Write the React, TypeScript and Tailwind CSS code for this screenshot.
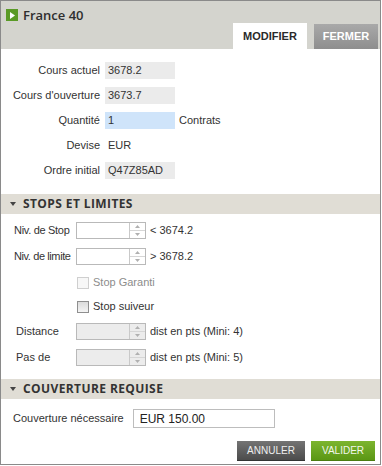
import React from "react";

const Spinner = ({ disabled }: { disabled?: boolean }) => (
  <div
    className={`flex h-[17px] w-[70px] shrink-0 border border-[#b9b9b9] ${disabled ? "bg-[#ececec]" : "bg-white"}`}
  >
    <div className="flex-1" />
    <div className="flex w-[16px] flex-col border-l border-[#c9c9c9]">
      <div className="flex flex-1 items-center justify-center border-b border-[#d6d6d6]">
        <svg width="5" height="3" viewBox="0 0 5 3">
          <polygon points="0,3 5,3 2.5,0" fill="#b0b0b0" />
        </svg>
      </div>
      <div className="flex flex-1 items-center justify-center">
        <svg width="5" height="3" viewBox="0 0 5 3">
          <polygon points="0,0 5,0 2.5,3" fill="#b0b0b0" />
        </svg>
      </div>
    </div>
  </div>
);

const Band = ({ title }: { title: string }) => (
  <div className="flex h-[20px] items-center bg-[#e0ddd5] pl-[9px]">
    <svg width="6" height="4" viewBox="0 0 6 4" className="mr-[7px]">
      <polygon points="0,0 6,0 3,4" fill="#444" />
    </svg>
    <span
      className="text-[12px] font-bold tracking-[0.4px] text-[#333] leading-none whitespace-nowrap"
      style={{ fontFamily: '"Open Sans", sans-serif' }}
    >
      {title}
    </span>
  </div>
);

const Checkbox = ({ disabled }: { disabled?: boolean }) => (
  <div
    className={`h-[12px] w-[12px] border ${
      disabled
        ? "border-[#cfcfcf] bg-[#f7f7f7]"
        : "border-[#8f8f8f] bg-gradient-to-b from-[#dcdcdc] to-[#f4f4f4]"
    }`}
  />
);

export default function App() {
  const rows = [
    { label: "Cours actuel", value: "3678.2", kind: "gray" },
    { label: "Cours d'ouverture", value: "3673.7", kind: "gray" },
    { label: "Quantité", value: "1", kind: "blue", suffix: "Contrats" },
    { label: "Devise", value: "EUR", kind: "plain" },
    { label: "Ordre initial", value: "Q47Z85AD", kind: "gray" },
  ];
  return (
    <div
      className="flex h-[465px] w-[381px] flex-col border border-[#8a8a8a] bg-white text-[11px] text-[#333] whitespace-nowrap"
      style={{ fontFamily: '"Liberation Sans", Arial, sans-serif' }}
    >
      {/* Header */}
      <div className="flex h-[48px] flex-col bg-[#d4d4ce]">
        <div className="flex h-[12px] items-center pl-[5px] mt-[8px]">
          <div className="flex h-[12px] w-[12px] items-center justify-center bg-[#5a9a26]">
            <svg width="5" height="7" viewBox="0 0 5 7">
              <polygon points="0,0 5,3.5 0,7" fill="#fff" />
            </svg>
          </div>
          <span
            className="ml-[5px] text-[13px] font-semibold text-[#2e2e2e] leading-none"
            style={{ fontFamily: '"Open Sans", sans-serif' }}
          >
            France 40
          </span>
        </div>
        <div className="mt-[2px] flex h-[26px] items-end justify-end gap-[7px] pr-[2px]">
          <div className="flex h-[26px] w-[74px] items-center justify-center bg-white text-[11px] font-bold text-[#2a2a2a]">
            MODIFIER
          </div>
          <div className="flex h-[25px] w-[64px] items-center justify-center bg-gradient-to-b from-[#a9a9a9] to-[#8e8e8e] text-[11px] font-bold text-white">
            FERMER
          </div>
        </div>
      </div>

      {/* Body */}
      <div className="flex flex-col gap-[8px] pt-[13px]">
        {rows.map((r) => (
          <div key={r.label} className="flex h-[17px] items-center">
            <div className="w-[99px] text-right">{r.label}</div>
            <div
              className={`ml-[5px] flex h-[17px] w-[70px] items-center pl-[3px] ${
                r.kind === "gray" ? "bg-[#ebebeb]" : r.kind === "blue" ? "bg-[#cfe4fa]" : ""
              }`}
            >
              {r.value}
            </div>
            {r.suffix && <div className="ml-[4px]">{r.suffix}</div>}
          </div>
        ))}
      </div>

      <div className="mt-[15px]">
        <Band title="STOPS ET LIMITES" />
      </div>

      <div className="flex flex-col pl-[13px] pt-[8px]">
        <div className="flex h-[17px] items-center">
          <div className="w-[62px] shrink-0 tracking-[-0.3px]">Niv. de Stop</div>
          <Spinner />
          <div className="ml-[4px]">&lt; 3674.2</div>
        </div>
        <div className="mt-[9px] flex h-[17px] items-center">
          <div className="w-[62px] shrink-0 tracking-[-0.4px]">Niv. de limite</div>
          <Spinner />
          <div className="ml-[4px]">&gt; 3678.2</div>
        </div>
        <div className="mt-[9px] flex h-[17px] items-center pl-[63px]">
          <Checkbox disabled />
          <span className="ml-[4px] text-[#8c8c8c]">Stop Garanti</span>
        </div>
        <div className="mt-[7px] flex h-[17px] items-center pl-[63px]">
          <Checkbox />
          <span className="ml-[4px]">Stop suiveur</span>
        </div>
        <div className="mt-[8px] flex h-[17px] items-center">
          <div className="w-[62px] shrink-0 pl-[2px]">Distance</div>
          <Spinner disabled />
          <div className="ml-[4px]">dist en pts (Mini: 4)</div>
        </div>
        <div className="mt-[9px] flex h-[17px] items-center">
          <div className="w-[62px] shrink-0 pl-[2px]">Pas de</div>
          <Spinner disabled />
          <div className="ml-[4px]">dist en pts (Mini: 5)</div>
        </div>
      </div>

      <div className="mt-[13px]">
        <Band title="COUVERTURE REQUISE" />
      </div>

      <div className="mt-[10px] flex items-center pl-[12px]">
        <div>Couverture nécessaire</div>
        <div className="ml-[9px] flex h-[19px] w-[142px] items-center border border-[#bdbdbd] pl-[6px] text-[12px] text-[#222]">
          EUR 150.00
        </div>
      </div>

      <div className="mt-[13px] flex justify-end gap-[6px] pr-[5px]">
        <div className="flex h-[20px] w-[68px] items-center justify-center border-b border-[#333] bg-gradient-to-b from-[#747474] to-[#4c4c4c] text-[10px] text-[#eeeeee]">
          ANNULER
        </div>
        <div className="flex h-[20px] w-[64px] items-center justify-center border-b border-[#4a7c10] bg-gradient-to-b from-[#7cb52e] to-[#5b9714] text-[10px] text-[#f2f7ea]">
          VALIDER
        </div>
      </div>
    </div>
  );
}
